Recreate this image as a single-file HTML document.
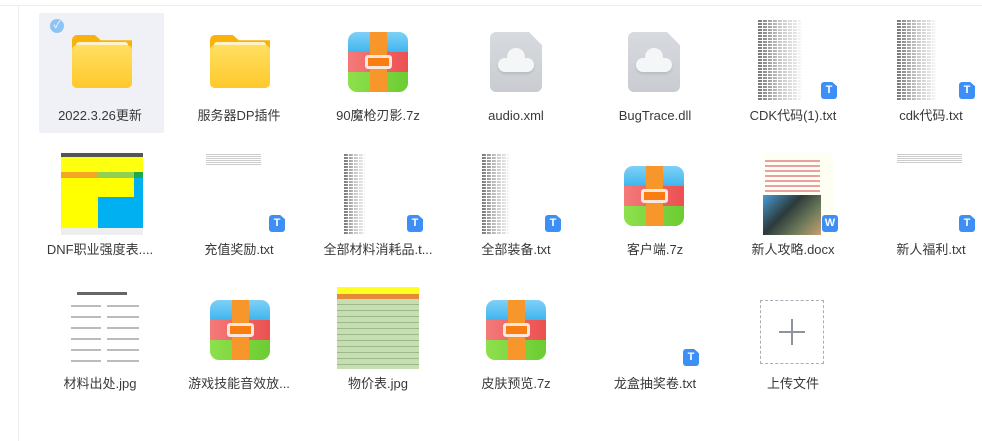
<!DOCTYPE html>
<html><head><meta charset="utf-8"><style>
body{margin:0;width:982px;height:441px;background:#fff;position:relative;overflow:hidden;font-family:"Liberation Sans","Noto Sans CJK SC",sans-serif;}
.a{position:absolute}
.lbl{position:absolute;width:140px;text-align:center;font-size:13px;color:#383838;white-space:nowrap;line-height:16px}
.zip{position:absolute;width:60px;height:60px;border-radius:9px;overflow:hidden;background:linear-gradient(#7fd0f6,#3fb6ee) 0 0/100% 20px no-repeat,linear-gradient(90deg,#f47a7a,#ec5050) 0 20px/100% 20px no-repeat,linear-gradient(90deg,#8ee04c,#6ccc32) 0 40px/100% 20px no-repeat}
.zip:before{content:"";position:absolute;left:22px;top:0;width:17px;height:60px;background:#f7962a}
.zip:after{content:"";position:absolute;left:17px;top:23px;width:21px;height:8px;border:3px solid #fbe6dd;background:#f97d10;border-radius:3px}
.fold{position:absolute;width:60px;height:53px}
.fold .b{position:absolute;left:0;top:0;width:60px;height:53px;background:#f9b20c;border-radius:5px;clip-path:polygon(0 0,38% 0,48% 10%,100% 10%,100% 100%,0 100%)}
.fold .p{position:absolute;left:4px;top:7px;width:52px;height:10px;background:#fff2c8;border-radius:3px}
.fold .f{position:absolute;left:0;top:10px;width:60px;height:43px;background:linear-gradient(#ffdf62,#ffc92c);border-radius:5px}
.doc{position:absolute;width:52px;height:60px;background:linear-gradient(#d7dade,#c9ccd1);border-radius:6px;clip-path:polygon(0 0,75% 0,100% 22%,100% 100%,0 100%)}
.cloud{position:absolute;left:8px;top:26px;width:36px;height:14px;background:#f5f6f8;border-radius:7px;box-shadow:0 2px 2px #b8bcc2}
.cloud:before{content:"";position:absolute;left:9px;top:-10px;width:18px;height:18px;border-radius:50%;background:#f5f6f8}
.txt{position:absolute;background:repeating-linear-gradient(#fff 0,#fff 1px,transparent 1px,transparent 3px),repeating-linear-gradient(90deg,transparent 0,transparent 4px,#fff 4px,#fff 5px),linear-gradient(90deg,#777 0,#999 20%,#c8c8c8 50%,#e6e6e6 85%,#fff 100%)}
.T{position:absolute;width:16px;height:17px;background:#3d8ef5;border-radius:3px;color:#fff;font-size:11px;font-weight:bold;text-align:center;line-height:17px;clip-path:polygon(0 0,70% 0,100% 25%,100% 100%,0 100%)}
</style></head><body>
<div class="a" style="left:0;top:5px;width:982px;height:1px;background:#eceef1"></div>
<div class="a" style="left:18px;top:5px;width:1px;height:436px;background:#eceef1"></div>
<div class="a" style="left:39px;top:13px;width:125px;height:120px;background:#f0f1f6;border-radius:2px"></div>
<div class="a" style="left:50px;top:19px;width:14px;height:14px;border-radius:50%;background:#8ec4f5;color:#fff;font-size:10px;text-align:center;line-height:14px">✓</div>

<div class="fold" style="left:72px;top:35px"><div class="b"></div><div class="p"></div><div class="f"></div></div>
<div class="lbl" style="left:30px;top:108px">2022.3.26更新</div>
<div class="fold" style="left:210px;top:35px"><div class="b"></div><div class="p"></div><div class="f"></div></div>
<div class="lbl" style="left:169px;top:108px">服务器DP插件</div>
<div class="zip" style="left:348px;top:32px"></div>
<div class="lbl" style="left:308px;top:108px">90魔枪刃影.7z</div>
<div class="doc" style="left:490px;top:32px"><div class="cloud"></div></div>
<div class="lbl" style="left:446px;top:108px">audio.xml</div>
<div class="doc" style="left:628px;top:32px"><div class="cloud"></div></div>
<div class="lbl" style="left:585px;top:108px">BugTrace.dll</div>
<div class="txt" style="left:758px;top:19px;width:45px;height:81px"></div>
<div class="T" style="left:821px;top:82px">T</div>
<div class="lbl" style="left:723px;top:108px">CDK代码(1).txt</div>
<div class="txt" style="left:897px;top:19px;width:40px;height:81px"></div>
<div class="T" style="left:959px;top:82px">T</div>
<div class="lbl" style="left:861px;top:108px">cdk代码.txt</div>

<div class="a" style="left:61px;top:153px;width:82px;height:82px;background:#eee">
 <div class="a" style="left:0;top:4px;width:82px;height:15px;background:#ffff10"></div>
 <div class="a" style="left:0;top:19px;width:37px;height:6px;background:#f5a623"></div>
 <div class="a" style="left:37px;top:19px;width:36px;height:6px;background:#92d050"></div>
 <div class="a" style="left:73px;top:19px;width:9px;height:6px;background:#1ea94b"></div>
 <div class="a" style="left:0;top:25px;width:37px;height:50px;background:#ffff00"></div>
 <div class="a" style="left:37px;top:25px;width:36px;height:19px;background:#ffff00"></div>
 <div class="a" style="left:37px;top:44px;width:45px;height:31px;background:#00b0f0"></div>
 <div class="a" style="left:73px;top:25px;width:9px;height:19px;background:#00b0f0"></div>
 <div class="a" style="left:0;top:0;width:82px;height:4px;background:#555"></div>
</div>
<div class="lbl" style="left:30px;top:242px">DNF职业强度表....</div>
<div class="a" style="left:206px;top:153px;width:55px;height:12px;background:repeating-linear-gradient(#fff 0,#fff 1px,#ccc 1px,#ccc 2px)"></div>
<div class="T" style="left:269px;top:215px">T</div>
<div class="lbl" style="left:169px;top:242px">充值奖励.txt</div>
<div class="txt" style="left:344px;top:153px;width:22px;height:82px"></div>
<div class="T" style="left:407px;top:215px">T</div>
<div class="lbl" style="left:308px;top:242px">全部材料消耗品.t...</div>
<div class="txt" style="left:482px;top:153px;width:28px;height:82px"></div>
<div class="T" style="left:545px;top:215px">T</div>
<div class="lbl" style="left:446px;top:242px">全部装备.txt</div>
<div class="zip" style="left:624px;top:166px"></div>
<div class="lbl" style="left:585px;top:242px">客户端.7z</div>
<div class="a" style="left:763px;top:153px;width:70px;height:82px;background:#fffef2">
 <div class="a" style="left:2px;top:4px;width:55px;height:36px;background:repeating-linear-gradient(#fffef2 0,#fffef2 3px,#e8a0a0 3px,#e8a0a0 5px)"></div>
 <div class="a" style="left:0;top:42px;width:58px;height:40px;background:linear-gradient(135deg,#4a9bd8,#2c3a3a 40%,#6d7a5a 70%,#c9a070)"></div>
</div>
<div class="a" style="left:822px;top:215px;width:16px;height:17px;background:#3d8ef5;border-radius:3px;color:#fff;font-size:11px;font-weight:bold;text-align:center;line-height:17px">W</div>
<div class="lbl" style="left:723px;top:242px">新人攻略.docx</div>
<div class="a" style="left:897px;top:153px;width:65px;height:10px;background:repeating-linear-gradient(#fff 0,#fff 1px,#ccc 1px,#ccc 2px)"></div>
<div class="T" style="left:959px;top:215px">T</div>
<div class="lbl" style="left:861px;top:242px">新人福利.txt</div>

<div class="a" style="left:61px;top:287px;width:82px;height:82px;background:#fff">
 <div class="a" style="left:16px;top:5px;width:50px;height:3px;background:#666"></div>
 <div class="a" style="left:10px;top:14px;width:30px;height:63px;background:repeating-linear-gradient(#fff 0,#fff 4px,#bbb 4px,#bbb 6px,#fff 6px,#fff 11px)"></div>
 <div class="a" style="left:46px;top:14px;width:32px;height:63px;background:repeating-linear-gradient(#fff 0,#fff 4px,#bbb 4px,#bbb 6px,#fff 6px,#fff 11px)"></div>
</div>
<div class="lbl" style="left:30px;top:376px">材料出处.jpg</div>
<div class="zip" style="left:210px;top:300px"></div>
<div class="lbl" style="left:169px;top:376px">游戏技能音效放...</div>
<div class="a" style="left:337px;top:287px;width:82px;height:82px;background:repeating-linear-gradient(#c5dfb3 0,#c5dfb3 5px,#9db88a 5px,#9db88a 6px)">
 <div class="a" style="left:0;top:0;width:82px;height:7px;background:#ffff20"></div>
 <div class="a" style="left:0;top:7px;width:82px;height:5px;background:#e58a3a"></div>
</div>
<div class="lbl" style="left:308px;top:376px">物价表.jpg</div>
<div class="zip" style="left:486px;top:300px"></div>
<div class="lbl" style="left:446px;top:376px">皮肤预览.7z</div>
<div class="T" style="left:683px;top:349px">T</div>
<div class="lbl" style="left:585px;top:376px">龙盒抽奖卷.txt</div>
<div class="a" style="left:760px;top:300px;width:62px;height:62px;border:1px dashed #a8adb8"></div>
<div class="a" style="left:779px;top:331px;width:26px;height:2px;background:#8e939e"></div>
<div class="a" style="left:791px;top:319px;width:2px;height:26px;background:#8e939e"></div>
<div class="lbl" style="left:723px;top:376px">上传文件</div>
</body></html>
